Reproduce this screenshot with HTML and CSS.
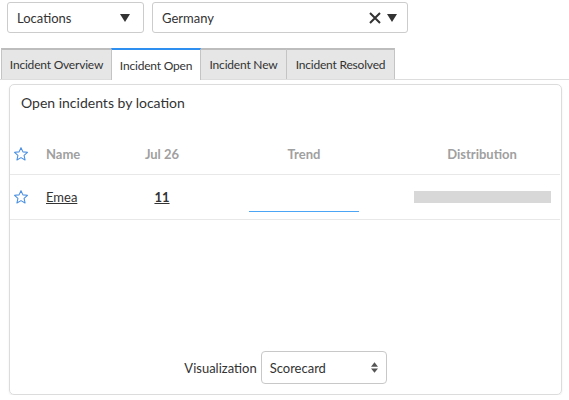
FILE: index.html
```html
<!doctype html>
<html lang="en">
<head>
<meta charset="utf-8">
<title>Open incidents by location</title>
<link rel="stylesheet" href="styles.css">
</head>
<body>
<div class="filters">
  <div class="picker picker-field">
    <span class="picker-text">Locations</span>
    <svg class="caret" viewBox="0 0 10 8" width="10" height="8"><path d="M0 0h10L5 8z"/></svg>
  </div>
  <div class="picker picker-value">
    <span class="picker-text">Germany</span>
    <svg class="clear" viewBox="0 0 12 12" width="12" height="12"><path d="M1 1l10 10M11 1L1 11"/></svg>
    <svg class="caret" viewBox="0 0 10 8" width="10" height="8"><path d="M0 0h10L5 8z"/></svg>
  </div>
</div>

<nav class="tabs">
  <a class="tab tab-overview">Incident Overview</a>
  <a class="tab tab-open active">Incident Open</a>
  <a class="tab tab-new">Incident New</a>
  <a class="tab tab-resolved">Incident Resolved</a>
</nav>

<section class="panel">
  <h1 class="panel-title">Open incidents by location</h1>
  <div class="grid">
    <div class="row head">
      <span class="cell star"><svg viewBox="0 0 24 24" width="16" height="16"><path d="M12 2.5l2.9 6.3 6.8.7-5.1 4.6 1.5 6.8L12 17.4l-6.1 3.5 1.5-6.8-5.1-4.6 6.8-.7z"/></svg></span>
      <span class="cell name">Name</span>
      <span class="cell mid">Jul 26</span>
      <span class="cell mid">Trend</span>
      <span class="cell mid">Distribution</span>
    </div>
    <div class="row">
      <span class="cell star"><svg viewBox="0 0 24 24" width="16" height="16"><path d="M12 2.5l2.9 6.3 6.8.7-5.1 4.6 1.5 6.8L12 17.4l-6.1 3.5 1.5-6.8-5.1-4.6 6.8-.7z"/></svg></span>
      <span class="cell name"><a href="#">Emea</a></span>
      <span class="cell mid"><a class="count" href="#">11</a></span>
      <span class="cell mid"><span class="trend"></span></span>
      <span class="cell mid"><span class="bar"></span></span>
    </div>
  </div>
  <div class="viz">
    <label for="viz">Visualization</label>
    <div class="select">
      <span>Scorecard</span>
      <svg viewBox="0 0 8 12" width="7" height="11"><path d="M4 0l4 5H0zM4 12L0 7h8z"/></svg>
    </div>
  </div>
</section>
</body>
</html>
```

FILE: styles.css
```css
html, body { margin: 0; padding: 0; background: #fff; color: #333; font-family: Lato, "Open Sans", sans-serif; font-size: 13px; }

.filters { display: flex; gap: 8px; padding: 2px 0 0 7px; }
.picker { display: flex; align-items: center; height: 29px; border: 1px solid #ccc; border-radius: 3px; padding: 0 10px 0 9px; box-sizing: content-box; }
.picker-field { width: 116px; }
.picker-value { width: 235px; }
.picker-text { flex: 1; font-size: 13px; color: #333; }
.caret { fill: #333; margin-left: 6px; }
.picker-field .caret { margin-right: 3px; }
.clear { stroke: #333; stroke-width: 2; }

.tabs { display: flex; margin-top: 15px; padding-left: 1px; border-bottom: 1px solid #ddd; height: 31px; }
.tab { display: flex; align-items: center; justify-content: center; box-sizing: border-box; background: #e6e6e6; border: 1px solid #c4c4c4; border-top: 2px solid #bdbdbd; border-bottom: 0; color: #333; font-size: 12px; letter-spacing: -0.2px; white-space: nowrap; margin-left: -1px; }
.tab:first-child { margin-left: 0; }
.tab-overview { width: 111px; }
.tab-open { width: 90px; }
.tab-new { width: 87px; }
.tab-resolved { width: 109px; }
.tab.active { background: #fff; border-top-color: #2f8ff0; height: 32px; position: relative; z-index: 1; }

.panel { display: flex; flex-direction: column; margin: 4px 7px 0 9px; height: 309px; border: 1px solid #dcdcdc; border-radius: 5px; box-shadow: 0 1px 2px rgba(0,0,0,0.08); }
.panel-title { margin: 0; padding: 9px 11px 0; font-size: 14px; font-weight: 400; color: #333; }

.grid { margin-top: 22px; }
.row { display: grid; grid-template-columns: 36px 74px 84px 200px 1fr; align-items: center; height: 44px; border-bottom: 1px solid #e8e8e8; margin-right: 1px; }
.row.head { height: 41px; }
.cell.star { display: flex; justify-content: flex-start; padding-left: 3px; }
.cell.star svg { fill: none; stroke: #4a90e2; stroke-width: 1.6; stroke-linejoin: round; }
.cell.mid { text-align: center; }
.head .cell { color: #a0a0a0; font-weight: 700; font-size: 13px; }
.name a { color: #333; text-decoration: underline; }
.count { color: #333; font-weight: 700; text-decoration: underline; }
.trend { display: block; width: 110px; height: 0; border-top: 1px solid #4da6f5; margin: 29px auto 0; }
.bar { display: block; width: 137px; height: 12px; background: #d8d8d8; margin: 0 auto 0; }

.viz { display: flex; justify-content: center; align-items: center; gap: 4px; margin-top: auto; margin-bottom: 10px; }
.viz label { font-size: 13px; color: #333; }
.select { display: flex; align-items: center; justify-content: space-between; width: 108px; height: 31px; padding: 0 8px; border: 1px solid #c8c8c8; border-radius: 4px; font-size: 13px; }
.select svg { fill: #555; }
```
